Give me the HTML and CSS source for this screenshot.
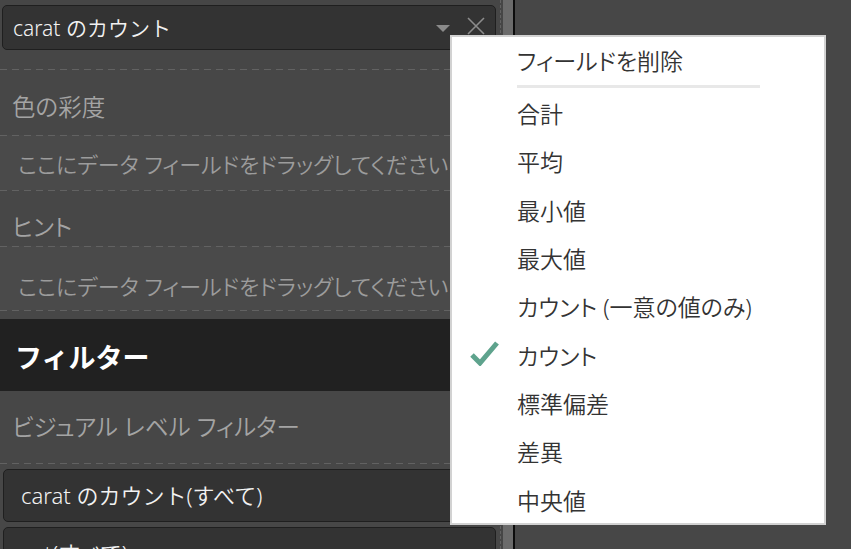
FILE: index.html
```html
<!DOCTYPE html>
<html lang="ja">
<head>
<meta charset="utf-8">
<title>Fields</title>
<link rel="stylesheet" href="styles.css">
</head>
<body>
<div class="app">
  <div class="panel">
    <div class="field field-top">
      <span class="field-text">carat のカウント</span>
      <span class="caret"></span>
      <svg class="close" width="20" height="20" viewBox="0 0 20 20"><path d="M2 2 L18 18 M18 2 L2 18" stroke="#8c8c8c" stroke-width="1.6" fill="none"/></svg>
    </div>
    <div class="spacer-top"></div>
    <div class="section-label label-color dashed">色の彩度</div>
    <div class="dropzone dz1 dashed">ここにデータ フィールドをドラッグしてください</div>
    <div class="section-label label-hint dashed">ヒント</div>
    <div class="dropzone dz2 dashed">ここにデータ フィールドをドラッグしてください</div>
    <div class="gap-before-header dashed"></div>
    <div class="header">フィルター</div>
    <div class="section-label label-filter">ビジュアル レベル フィルター</div>
    <div class="filter-list dashed">
      <div class="field field-filter">carat のカウント(すべて)</div>
      <div class="field field-filter">cut(すべて)</div>
    </div>
  </div>
  <div class="scroll"></div>
  <div class="divider"></div>
  <div class="right"></div>

  <div class="menu">
    <div class="menu-remove">フィールドを削除</div>
    <div class="menu-sep"></div>
    <div class="menu-item"><span class="check-cell"></span><span>合計</span></div>
    <div class="menu-item"><span class="check-cell"></span><span>平均</span></div>
    <div class="menu-item"><span class="check-cell"></span><span>最小値</span></div>
    <div class="menu-item"><span class="check-cell"></span><span>最大値</span></div>
    <div class="menu-item"><span class="check-cell"></span><span>カウント (一意の値のみ)</span></div>
    <div class="menu-item"><span class="check-cell"><svg width="30" height="26" viewBox="0 0 30 26"><path d="M3 15 L11 23 L28 3" stroke="#5ea38d" stroke-width="5" fill="none" stroke-linejoin="miter"/></svg></span><span>カウント</span></div>
    <div class="menu-item"><span class="check-cell"></span><span>標準偏差</span></div>
    <div class="menu-item"><span class="check-cell"></span><span>差異</span></div>
    <div class="menu-item"><span class="check-cell"></span><span>中央値</span></div>
  </div>
</div>
</body>
</html>
```

FILE: styles.css
```css
html, body {
  margin: 0;
  padding: 0;
}
body {
  width: 851px;
  height: 549px;
  overflow: hidden;
  background: #464646;
  font-family: "Noto Sans", "Noto Sans CJK JP", sans-serif;
  font-weight: 350;
}
.app {
  position: relative;
  display: flex;
  width: 851px;
  height: 549px;
}
.panel {
  width: 500px;
  flex: none;
  background: #464646;
  border-right: 1px dashed #626262;
  overflow: hidden;
}
.field {
  box-sizing: border-box;
  width: 494px;
  margin-left: 2px;
  background: #333333;
  border: 1px solid #1f1f1f;
  border-radius: 5px;
  color: #f2f2f2;
  font-size: 21px;
  line-height: 30px;
  white-space: nowrap;
}
.field-top {
  margin-top: 5px;
  height: 45px;
  display: flex;
  align-items: center;
  padding: 0 9px 0 10px;
}
.field-text {
  flex: 1;
}
.caret {
  width: 0;
  height: 0;
  border-left: 7px solid transparent;
  border-right: 7px solid transparent;
  border-top: 7px solid #8a8a8a;
  margin-right: 16px;
  margin-top: 2px;
}
.close {
  display: block;
  margin-top: -4px;
}
.spacer-top {
  height: 19px;
}
.dashed {
  background-image: repeating-linear-gradient(90deg, #626262 0 7px, transparent 7px 12px);
  background-size: 100% 1px;
  background-repeat: no-repeat;
  background-position: top left;
}
.section-label {
  box-sizing: border-box;
  color: #a4a4a4;
  font-size: 23.5px;
  line-height: 30px;
  padding-left: 12px;
  white-space: nowrap;
  background-color: #474747;
  font-feature-settings: "palt";
}
.label-color {
  height: 66px;
  padding-top: 23px;
}
.label-hint {
  height: 56px;
  padding-top: 22px;
}
.label-filter {
  height: 72px;
  padding-top: 21px;
  background-color: #474747;
}
.dropzone {
  box-sizing: border-box;
  color: #9c9c9c;
  font-size: 22px;
  line-height: 30px;
  padding-left: 18px;
  white-space: nowrap;
  background-color: #4a4a4a;
  font-feature-settings: "palt";
}
.dz1 {
  height: 55px;
  padding-top: 14px;
}
.dz2 {
  height: 64px;
  padding-top: 25px;
}
.gap-before-header {
  height: 9px;
  background-color: #474747;
}
.header {
  box-sizing: border-box;
  height: 72px;
  background: #212121;
  color: #ffffff;
  font-weight: bold;
  font-size: 27px;
  line-height: 36px;
  padding: 21px 0 0 15px;
}
.filter-list {
  padding-top: 6px;
  display: flex;
  flex-direction: column;
  gap: 5px;
  background-color: #474747;
}
.field-filter {
  height: 53px;
  margin-left: 3px;
  width: 493px;
  font-size: 22px;
  padding: 10px 0 0 17px;
}
.scroll {
  width: 10px;
  flex: none;
  margin-left: 2px;
  background: #6b6b6b;
}
.divider {
  width: 2px;
  flex: none;
  background: #0c0c0c;
}
.right {
  flex: 1;
  background: #474747;
}
.menu {
  position: absolute;
  left: 450px;
  top: 35px;
  width: 376px;
  height: 490px;
  box-sizing: border-box;
  background: #ffffff;
  border: 2px solid #d2d2d2;
  color: #333333;
  font-size: 23px;
  font-feature-settings: "palt";
}
.menu-remove {
  height: 48px;
  line-height: 48px;
  padding-left: 65px;
}
.menu-sep {
  margin-left: 65px;
  width: 243px;
  height: 3px;
  background: #e8e8e8;
  margin-bottom: 1px;
}
.menu-item {
  display: flex;
  align-items: center;
  height: 48.3px;
  padding-left: 17px;
  white-space: nowrap;
}
.check-cell {
  width: 48px;
  flex: none;
  display: flex;
  align-items: center;
}
.check-cell svg {
  display: block;
  margin-top: -3px;
}
```
